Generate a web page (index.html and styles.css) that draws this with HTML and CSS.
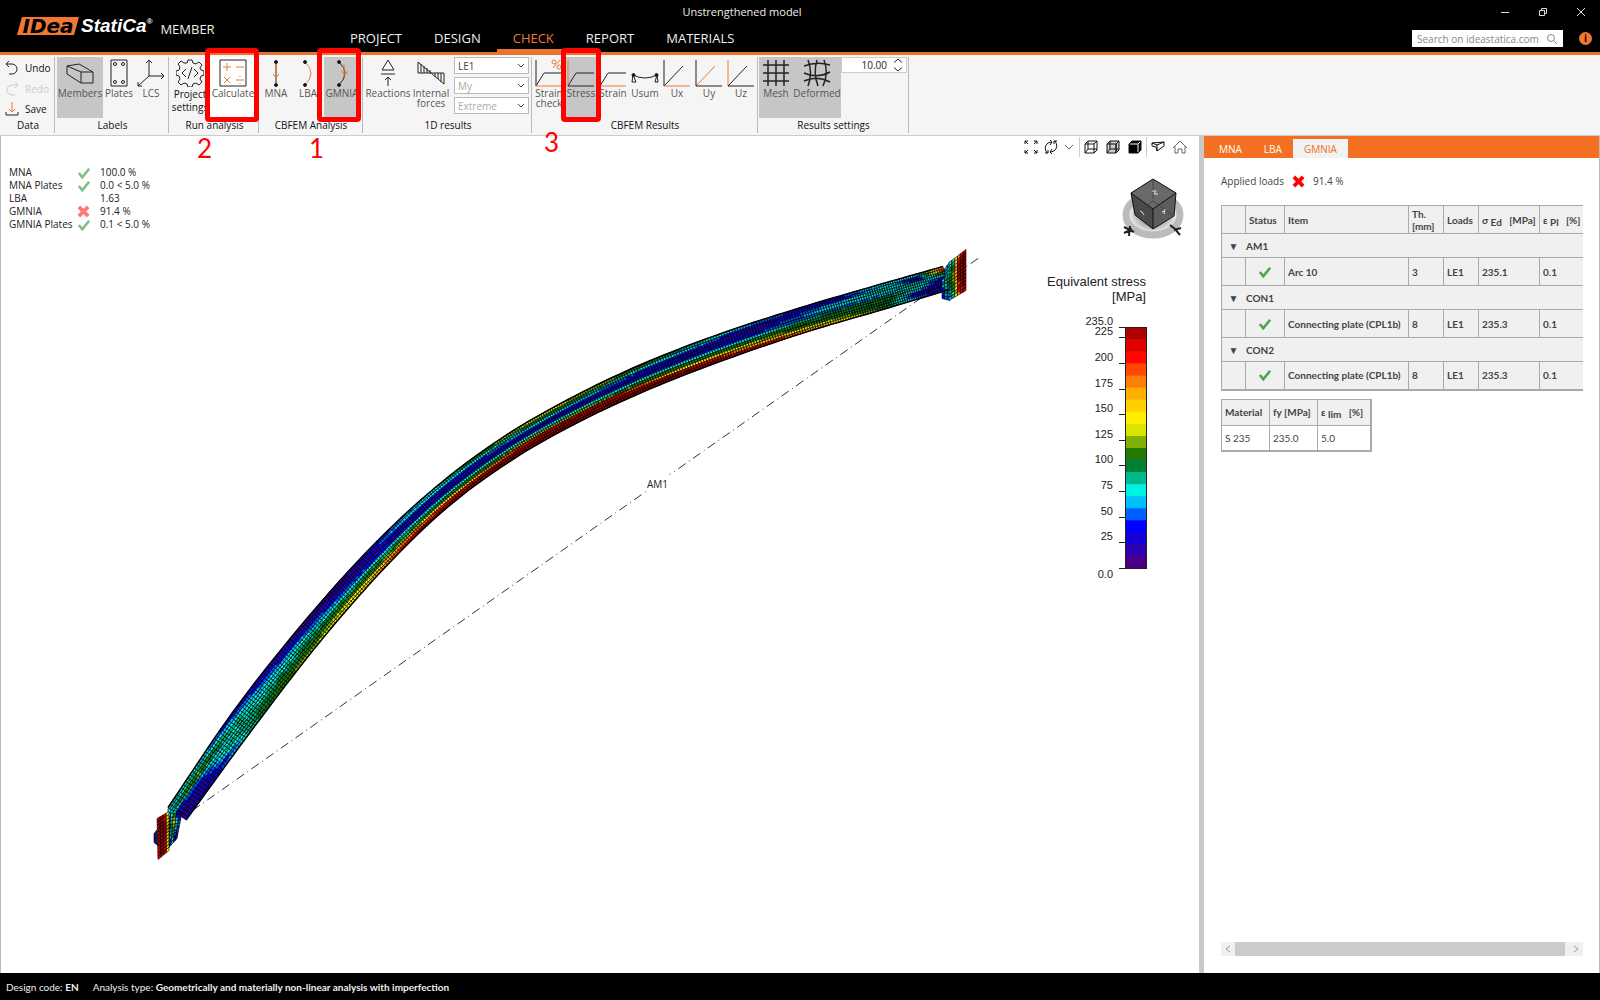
FILE: index.html
```html
<!DOCTYPE html>
<html lang="en">
<head>
<meta charset="utf-8">
<title>IDEA StatiCa Member</title>
<link rel="stylesheet" href="styles.css">
</head>
<body>
<header class="titlebar">
  <div class="brand">
    <span class="brand-idea">IDea</span>
    <span class="brand-statica">StatiCa<sup>®</sup></span>
    <span class="brand-app">MEMBER</span>
  </div>
  <nav class="menu">
    <a href="#project">PROJECT</a>
    <a href="#design">DESIGN</a>
    <a href="#check" class="active">CHECK</a>
    <a href="#report">REPORT</a>
    <a href="#materials">MATERIALS</a>
  </nav>
  <div class="doc-title">Unstrengthened model</div>
  <div class="title-right">
    <div class="window-buttons">
      <button aria-label="Minimize"><svg width="12" height="12" viewBox="0 0 12 12"><path d="M2 6.500h8"/></svg></button>
      <button aria-label="Restore"><svg width="12" height="12" viewBox="0 0 12 12"><path d="M2.500 4.500h5v5h-5zM4.500 4.500v-2h5v5h-2"/></svg></button>
      <button aria-label="Close"><svg width="12" height="12" viewBox="0 0 12 12"><path d="M2 2l8 8M10 2l-8 8"/></svg></button>
    </div>
    <div class="search-row">
      <div class="search">
        <input type="text" placeholder="Search on ideastatica.com" aria-label="Search on ideastatica.com">
        <svg width="12" height="12" viewBox="0 0 12 12"><circle cx="5" cy="5" r="3.500"/><path d="M7.500 7.500L11 11"/></svg>
      </div>
      <button class="info" aria-label="Information">i</button>
    </div>
  </div>
</header>

<section class="ribbon">
  <div class="group g-data">
    <div class="group-body stack">
      <button class="line-btn"><svg width="14" height="16" viewBox="0 0 14 16"><path d="M4 1L1 4l3 3M1 4h6a5 5 0 0 1 0 10H4"/></svg>Undo</button>
      <button class="line-btn off" disabled><svg width="14" height="16" viewBox="0 0 14 16"><path d="M10 1l3 3-3 3M13 4H7a5 5 0 0 0 0 10h3"/></svg>Redo</button>
      <button class="line-btn"><svg width="14" height="16" viewBox="0 0 14 16"><path class="o" d="M7 1v10M4 8l3 3 3-3"/><path d="M1 11v3h12v-3"/></svg>Save</button>
    </div>
    <div class="group-name">Data</div>
  </div>

  <div class="group g-labels">
    <div class="group-body">
      <button class="tool on w46"><svg width="28" height="28" viewBox="0 0 28 28"><path d="M1 7l12-2 14 8v11H15L1 15zM1 7l14 6h12M15 13v11"/></svg>Members</button>
      <button class="tool w32"><svg width="28" height="28" viewBox="0 0 28 28"><path d="M6 1h16v26H6z"/><circle cx="10" cy="5" r="1.500"/><circle cx="18" cy="5" r="1.500"/><circle cx="10" cy="23" r="1.500"/><circle cx="18" cy="23" r="1.500"/></svg>Plates</button>
      <button class="tool w32"><svg width="28" height="28" viewBox="0 0 28 28"><path d="M12 17V1M9 4l3-3 3 3M12 17h15M24 14l3 3-3 3M12 17L1 27M1 23v4h4"/></svg>LCS</button>
    </div>
    <div class="group-name">Labels</div>
  </div>

  <div class="group g-run">
    <div class="group-body">
      <button class="tool dark w38"><svg width="28" height="28" viewBox="0 0 28 28"><path d="M11 4l1-3h4l1 3 3 1 3-2 3 3-2 3 1 2 3 1v4l-3 1-1 3 2 3-3 3-3-2-3 1-1 3h-4l-1-3-3-1-3 2-3-3 2-3-1-3-3-1v-4l3-1 1-3-2-3 3-3 3 2zM10 10l-4 4 4 4M18 10l4 4-4 4M16 8l-4 12"/></svg>Project settings</button>
      <button class="tool hover w48"><svg width="28" height="28" viewBox="0 0 28 28"><path d="M1 1h26v26H1z"/><path class="o" d="M8 4v8M4 8h8M17 8h8M5 18l6 6M11 18l-6 6M17 21h8M21 17v1M21 24v1"/></svg>Calculate</button>
    </div>
    <div class="group-name">Run analysis</div>
  </div>

  <div class="group g-analysis">
    <div class="group-body">
      <button class="tool w32"><svg width="28" height="28" viewBox="0 0 28 28"><path d="M14 3v23"/><circle class="f" cx="14" cy="3" r="1.500"/><circle class="f" cx="14" cy="26" r="1.500"/><path class="o" d="M14 5v14M11 15l3 4 3-4"/></svg>MNA</button>
      <button class="tool w32"><svg width="28" height="28" viewBox="0 0 28 28"><path class="o" d="M11 3q12 11 0 23"/><circle class="f" cx="11" cy="3" r="1.500"/><circle class="f" cx="11" cy="26" r="1.500"/></svg>LBA</button>
      <button class="tool on w36"><svg width="28" height="28" viewBox="0 0 28 28"><path d="M11 3q12 11 0 23"/><circle class="f" cx="11" cy="3" r="1.500"/><circle class="f" cx="11" cy="26" r="1.500"/><path class="o" d="M16 5v12M13 12l4 4 3-4"/></svg>GMNIA</button>
    </div>
    <div class="group-name">CBFEM Analysis</div>
  </div>

  <div class="group g-1d">
    <div class="group-body">
      <button class="tool w46"><svg width="28" height="28" viewBox="0 0 28 28"><path d="M14 1l6 10H8zM7 15h14M14 27V18M11 21l3-3 3 3"/></svg>Reactions</button>
      <button class="tool w40"><svg width="28" height="28" viewBox="0 0 28 28"><path d="M1 3v11h26v11zM4 5v9M7 7v7M10 9v5M13 11v3M18 14v4M21 14v6M24 14v9"/></svg>Internal forces</button>
      <div class="selects">
        <select aria-label="Load case"><option>LE1</option></select>
        <select aria-label="Component" disabled><option>My</option></select>
        <select aria-label="Values" disabled><option>Extreme</option></select>
      </div>
    </div>
    <div class="group-name">1D results</div>
  </div>

  <div class="group g-results">
    <div class="group-body">
      <button class="tool w32"><svg width="28" height="28" viewBox="0 0 28 28"><path d="M1 1v26l8-13h18"/><path class="o" d="M1 27h26M18 9l7-8"/><circle class="o" cx="19" cy="3" r="2"/><circle class="o" cx="24" cy="8" r="2"/></svg>Strain check</button>
      <button class="tool on w32"><svg width="28" height="28" viewBox="0 0 28 28"><path class="o" d="M1 1v26"/><path d="M27 27H1l8-13h18"/></svg>Stress</button>
      <button class="tool w32"><svg width="28" height="28" viewBox="0 0 28 28"><path d="M1 1v26l8-13h18"/><path class="o" d="M1 27h26"/></svg>Strain</button>
      <button class="tool w32"><svg width="28" height="28" viewBox="0 0 28 28"><path d="M2 16q12 6 24 0M2 16l-1 7h4l-2-5zM26 16l-2 7h3zM2 16v2"/><circle class="f" cx="2.500" cy="16" r="1.500"/><circle class="f" cx="25.500" cy="16" r="1.500"/></svg>Usum</button>
      <button class="tool w32"><svg width="28" height="28" viewBox="0 0 28 28"><path d="M1 1v26L20 7"/><path class="o" d="M1 27h26"/></svg>Ux</button>
      <button class="tool w32"><svg width="28" height="28" viewBox="0 0 28 28"><path class="o" d="M1 27L20 7"/><path d="M1 1v26h26"/></svg>Uy</button>
      <button class="tool w32"><svg width="28" height="28" viewBox="0 0 28 28"><path class="o" d="M1 1v26"/><path d="M20 7L1 27h26"/></svg>Uz</button>
    </div>
    <div class="group-name">CBFEM Results</div>
  </div>

  <div class="group g-settings">
    <div class="group-body">
      <button class="tool on w34"><svg width="28" height="28" viewBox="0 0 28 28"><path class="b" d="M6 1v26M14 1v26M22 1v26M1 6h26M1 14h26M1 22h26"/></svg>Mesh</button>
      <button class="tool on w48"><svg width="28" height="28" viewBox="0 0 28 28"><path class="b" d="M5 1q5 13 0 26M14 1q-4 13 1 26M21 1q5 13-1 26M1 7q13-5 26-1M1 14q13 6 26-1M1 22q13-6 26 1"/></svg>Deformed</button>
      <div class="spin">
        <input type="text" value="10.00" aria-label="Deformation scale">
        <svg width="10" height="14" viewBox="0 0 10 14"><path d="M1 4.500L5 1l4 3.500M1 9.500L5 13l4-3.500"/></svg>
      </div>
    </div>
    <div class="group-name">Results settings</div>
  </div>

  <div class="mark mark-calculate"></div><span class="step step-2">2</span>
  <div class="mark mark-gmnia"></div><span class="step step-1">1</span>
  <div class="mark mark-stress"></div><span class="step step-3">3</span>
</section>

<main class="workspace">
  <section class="viewer">
    <svg class="scene" viewBox="0 136 1198 836" preserveAspectRatio="xMidYMid meet">
      <path class="axis" d="M977 258L935 287M935 287L190 811"/>
      <rect class="name-gap" x="645" y="474" width="26" height="18"/>
      <g id="model"></g>
      <text class="member-name" x="646" y="487">AM1</text>
    </svg>

    <table class="summary">
      <tr><th>MNA</th><td><svg class="tick" viewBox="0 0 14 14"><path d="M1 7l4 5L13 2"/></svg></td><td>100.0 %</td></tr>
      <tr><th>MNA Plates</th><td><svg class="tick" viewBox="0 0 14 14"><path d="M1 7l4 5L13 2"/></svg></td><td>0.0 &lt; 5.0 %</td></tr>
      <tr><th>LBA</th><td></td><td>1.63</td></tr>
      <tr><th>GMNIA</th><td><svg class="cross" viewBox="0 0 14 14"><path d="M2 2l10 10M12 2L2 12"/></svg></td><td>91.4 %</td></tr>
      <tr><th>GMNIA Plates</th><td><svg class="tick" viewBox="0 0 14 14"><path d="M1 7l4 5L13 2"/></svg></td><td>0.1 &lt; 5.0 %</td></tr>
    </table>

    <div class="view-tools">
      <button aria-label="Zoom to fit"><svg viewBox="0 0 14 14"><path d="M1 4V1h3M1 1l3 3M10 1h3v3M13 1l-3 3M1 10v3h3M1 13l3-3M13 10v3h-3M13 13l-3-3"/></svg></button>
      <button class="near" aria-label="Rotate"><svg viewBox="0 0 14 14"><path d="M3 13Q-1 7 4 3q2-1 4-1M6 0l2 2-2 3M11 1q4 6-1 10-2 1-4 1M8 9l-2 3 2 2M1 13h3v-3M13 1h-3v3"/></svg></button>
      <button class="nearer" aria-label="More"><svg class="thin" viewBox="0 0 14 14"><path d="M4 5l4 4 4-4"/></svg></button>
      <i></i>
      <button aria-label="Wireframe"><svg viewBox="0 0 14 14"><path d="M1 4h9v9H1zM1 4l3-3h9v9l-3 3M10 4l3-3M4 1v8L1 13M4 9h9"/></svg></button>
      <button aria-label="Transparent"><svg viewBox="0 0 14 14"><path fill="#ccc" d="M1 4h9v9H1zM1 4l3-3h9v9l-3 3M10 4l3-3"/><path d="M4 1v8L1 13M4 9h9M10 4v9"/></svg></button>
      <button aria-label="Solid"><svg viewBox="0 0 14 14"><path fill="#000" d="M1 4l3-3h9v9l-3 3H1z"/><path stroke="#fff" d="M2 4h8v8M10 4l2-2"/></svg></button>
      <i></i>
      <button aria-label="Perspective"><svg viewBox="0 0 14 14"><path d="M1 3l12-1v4L6 11l-1-4-4-1zM1 3l5 2 7-3M6 5v6"/></svg></button>
      <button aria-label="Home view"><svg class="thin" viewBox="0 0 14 14"><path d="M0 8l7-7 7 7M2 6.500V13h3V9h4v4h3V6.500"/></svg></button>
    </div>

    <svg class="cube" width="64" height="64" viewBox="0 0 64 64">
      <defs><radialGradient id="shade"><stop offset="0.4" stop-color="#999"/><stop offset="1" stop-color="#fff"/></radialGradient></defs>
      <ellipse cx="32" cy="38" rx="27" ry="20" fill="url(#shade)" stroke="#bbb" stroke-width="7"/>
      <path fill="#5d5d5d" d="M32 2l23 14-2 23-21 13-18-14L10 16z"/>
      <path fill="#4b4b4b" d="M10 16l22 16v20L14 38z"/>
      <path fill="#6a6a6a" d="M32 2l23 14-23 16-22-16z"/>
      <path fill="none" stroke="#111" d="M32 2l23 14-2 23-21 13-18-14L10 16zM10 16l22 16 23-16M32 32v20"/>
      <path fill="none" stroke="#444" d="M32 2v20M14 38l18-14 21 15"/>
      <path fill="none" stroke="#ddd" d="M31 14l4 0-2 3 4 0M19 34l2 1 2 3M41 35l3-1M44 32l-1 5"/>
      <path fill="none" stroke="#222" stroke-width="2" d="M3 50l10 5M9 49l-1 10M3 56l8-4M49 48l5 4 5 6M53 53l7-2"/>
    </svg>

    <svg class="legend" id="legend" width="110" height="320" viewBox="0 0 110 320"></svg>
  </section>

  <div class="splitter"></div>

  <aside class="panel">
    <nav class="tabs">
      <button>MNA</button><button>LBA</button><button class="active">GMNIA</button>
    </nav>
    <div class="panel-body">
      <div class="applied">Applied loads <svg class="cross strong" viewBox="0 0 14 14"><path d="M2 2l10 10M12 2L2 12"/></svg> 91.4 %</div>
      <div class="table-clip">
        <table class="grid checks">
          <colgroup><col class="c24"><col class="c39"><col class="c124"><col class="c35"><col class="c35"><col class="c61"><col class="c61"></colgroup>
          <thead><tr><th></th><th>Status</th><th>Item</th><th>Th. [mm]</th><th>Loads</th><th>σ <sub>Ed</sub> &nbsp; [MPa]</th><th>ε <sub>Pl</sub> &nbsp; [%]</th></tr></thead>
          <tbody>
            <tr class="head"><td class="mid">▼</td><td colspan="6">AM1</td></tr>
            <tr><td></td><td class="mid"><svg class="tick strong" viewBox="0 0 14 14"><path d="M1 7l4 5L13 2"/></svg></td><td>Arc 10</td><td>3</td><td>LE1</td><td>235.1</td><td>0.1</td></tr>
            <tr class="head"><td class="mid">▼</td><td colspan="6">CON1</td></tr>
            <tr><td></td><td class="mid"><svg class="tick strong" viewBox="0 0 14 14"><path d="M1 7l4 5L13 2"/></svg></td><td>Connecting plate (CPL1b)</td><td>8</td><td>LE1</td><td>235.3</td><td>0.1</td></tr>
            <tr class="head"><td class="mid">▼</td><td colspan="6">CON2</td></tr>
            <tr><td></td><td class="mid"><svg class="tick strong" viewBox="0 0 14 14"><path d="M1 7l4 5L13 2"/></svg></td><td>Connecting plate (CPL1b)</td><td>8</td><td>LE1</td><td>235.3</td><td>0.1</td></tr>
          </tbody>
        </table>
      </div>
      <table class="grid material">
        <colgroup><col class="c48"><col class="c48"><col class="c53"></colgroup>
        <thead><tr><th>Material</th><th>fy [MPa]</th><th>ε <sub>lim</sub> &nbsp; [%]</th></tr></thead>
        <tbody><tr><td>S 235</td><td>235.0</td><td>5.0</td></tr></tbody>
      </table>
      <div class="hscroll">
        <button aria-label="Scroll left"><svg width="6" height="8" viewBox="0 0 6 8"><path d="M5 1L1 4l4 3"/></svg></button>
        <div class="thumb"></div>
        <button aria-label="Scroll right"><svg width="6" height="8" viewBox="0 0 6 8"><path d="M1 1l4 3-4 3"/></svg></button>
      </div>
    </div>
  </aside>
</main>

<footer class="status">
  <span>Design code: <b>EN</b></span>
  <span>Analysis type: <b>Geometrically and materially non-linear analysis with imperfection</b></span>
</footer>
<script src="model.js"></script>
</body>
</html>
```
FILE: styles.css
```css
* { box-sizing: border-box; }
body {
  margin: 0;
  min-height: 100vh;
  display: flex;
  flex-direction: column;
  background: #fff;
  color: #222;
  font: 10px/14px "Open Sans", "Noto Sans", sans-serif;
}
button, input, select { font: inherit; color: inherit; }
button { border: 0; background: none; padding: 0; }
svg { display: block; fill: none; stroke: #222; flex: none; }
svg text { stroke: none; fill: #222; }
.o { stroke: #f07832; }
.f { fill: #111; }
.b { stroke-width: 1.5; }

/* title bar */
.titlebar {
  position: relative;
  display: flex;
  align-items: flex-end;
  height: 55px;
  background: #000;
  color: #eee;
  border-bottom: 3px solid #e9722f;
}
.brand { display: flex; align-items: center; width: 334px; padding-left: 17px; height: 52px; }
.brand-idea {
  width: 62px;
  height: 18px;
  background: #f07832;
  clip-path: polygon(8% 0, 100% 0, 92% 100%, 0 100%);
  color: #000;
  font: italic bold 20px/18px "DejaVu Sans", sans-serif;
  text-align: center;
}
.brand-statica { margin-left: 2px; font: italic bold 19px/20px "Liberation Sans", sans-serif; color: #fff; }
.brand-statica sup { font-size: 8px; line-height: 8px; vertical-align: 8px; }
.brand-app { margin: 6px 0 0 8px; font-size: 13px; line-height: 16px; }
.menu { display: flex; }
.menu a {
  padding: 0 16px;
  height: 23px;
  color: #eee;
  font-size: 13px;
  line-height: 18px;
  text-decoration: none;
  border-bottom: 3px solid transparent;
}
.menu a.active { color: #f07832; border-color: #e9722f; }
.doc-title { position: absolute; top: 4px; left: 0; right: 116px; text-align: center; font-size: 11px; line-height: 16px; pointer-events: none; }
.title-right { margin-left: auto; align-self: stretch; display: flex; flex-direction: column; padding: 6px 8px 0 0; gap: 12px; }
.window-buttons { display: flex; justify-content: flex-end; gap: 26px; padding-right: 5px; }
.window-buttons svg { stroke: #ddd; }
.search-row { display: flex; gap: 16px; align-items: center; }
.search { display: flex; align-items: center; width: 151px; height: 17px; background: #fff; padding: 0 5px; }
.search input { flex: 1; min-width: 0; border: 0; outline: 0; padding: 0; height: 17px; }
.search input::placeholder { color: #888; }
.search svg { stroke: #888; }
.info { width: 13px; height: 13px; border-radius: 50%; background: #f07832; color: #300; font-weight: bold; line-height: 13px; }

/* ribbon */
.ribbon { position: relative; display: flex; height: 81px; padding-top: 2px; background: #f5f5f5; border-bottom: 1px solid #ccc; }
.group { display: flex; flex-direction: column; border-right: 1px solid #bbb; height: 76px; padding-left: 2px; }
.group-body { display: flex; height: 61px; }
.group-name { text-align: center; line-height: 15px; color: #111; }
.stack { flex-direction: column; justify-content: space-between; padding: 2px 0 0 3px; }
.line-btn { display: flex; align-items: center; gap: 6px; height: 18px; color: #111; }
.line-btn.off { color: #ccc; }
.line-btn.off svg { stroke: #ccc; }
.g-data { width: 55px; }
.g-labels { width: 114px; }
.g-run { width: 90px; }
.g-analysis { width: 104px; padding-left: 1px; }
.g-1d { width: 169px; }
.g-results { width: 226px; padding-left: 1px; }
.g-settings { width: 151px; padding-left: 1px; }
.tool { display: flex; flex-direction: column; align-items: center; gap: 1px; padding-top: 2px; height: 61px; flex: none; line-height: 10px; color: #555; }
.tool.on { background: #c6c6c6; }
.tool.hover { background: #fff; }
.tool.dark { color: #111; line-height: 13px; }
.w32 { width: 32px; }
.w34 { width: 34px; }
.w36 { width: 36px; }
.w38 { width: 38px; }
.w40 { width: 40px; }
.w46 { width: 46px; }
.w48 { width: 48px; }
.selects { display: flex; flex-direction: column; gap: 3px; width: 75px; margin-left: 3px; }
.selects select {
  height: 17px;
  border: 1px solid #bbb;
  padding: 0 3px;
  color: #444;
  appearance: none;
  border-radius: 0;
  opacity: 1;
  background: #fff url("data:image/svg+xml,%3Csvg xmlns='http://www.w3.org/2000/svg' width='8' height='6'%3E%3Cpath d='M1 1l3 3 3-3' fill='none' stroke='%23444'/%3E%3C/svg%3E") no-repeat right 3px center;
}
.selects select:disabled { color: #aaa; }
.spin { display: flex; align-items: center; width: 66px; height: 16px; border: 1px solid #ccc; background: #fff; padding-right: 3px; gap: 6px; }
.spin input { flex: 1; min-width: 0; border: 0; padding: 0; background: none; height: 14px; text-align: right; }

/* tutorial marks over the ribbon */
.mark { position: absolute; top: -7px; height: 74px; border: 5px solid #f00; border-radius: 4px; }
.mark-calculate { left: 205px; width: 54px; }
.mark-gmnia { left: 317px; width: 44px; }
.mark-stress { left: 561px; width: 40px; }
.step { position: absolute; top: 79px; color: #f00; font: 26px/28px Lato, sans-serif; z-index: 1; }
.step-2 { left: 197px; }
.step-1 { left: 309px; }
.step-3 { left: 544px; top: 73px; }

/* workspace */
.workspace { flex: 1; display: flex; min-height: 0; }
.viewer { position: relative; flex: 1; min-width: 0; border-left: 1px solid #bbb; }
.scene { position: absolute; inset: 0; width: 100%; height: 100%; }
.axis { stroke: #333; stroke-dasharray: 9 4 1 4; }
.name-gap { fill: #fff; stroke: none; }
.member-name { font-size: 10px; }
.summary { position: absolute; left: 8px; top: 30px; border-collapse: collapse; line-height: 13px; }
.summary th { font-weight: normal; text-align: left; width: 68px; padding: 0; white-space: nowrap; }
.summary td { padding: 0; height: 13px; white-space: nowrap; }
.summary td:nth-child(2) { width: 23px; }
.tick { width: 14px; height: 12px; stroke: #7cc084; stroke-width: 3; }
.cross { width: 13px; height: 13px; stroke: #f77; stroke-width: 4; }
.tick.strong { stroke: #4ca64c; margin: 0 auto; }
.cross.strong { stroke: #f00; }
.view-tools { position: absolute; top: 1px; right: 12px; display: flex; align-items: center; gap: 8px; }
.view-tools svg { width: 14px; height: 14px; stroke: #111; overflow: visible; }
.view-tools .thin { stroke: #666; }
.view-tools .near { margin-left: -2px; }
.view-tools .nearer { margin-left: -5px; }
.view-tools i { width: 1px; height: 20px; background: #ccc; margin: 0 -4px; }
.cube { position: absolute; top: 41px; right: 14px; stroke: none; }
.legend { position: absolute; top: 136px; right: 40px; overflow: visible; }
.legend text { font-family: "Liberation Sans", sans-serif; font-size: 11px; text-anchor: end; }
.legend .title { font-size: 13px; }

.splitter { width: 5px; background: #c9c9c9; }
.panel { width: 396px; display: flex; flex-direction: column; border-right: 1px solid #bbb; color: #444; }
.tabs { display: flex; align-items: flex-end; height: 22px; background: #f36f21; padding-left: 4px; }
.tabs button { height: 19px; padding: 0 11px; color: #fff; }
.tabs button.active { background: #f2f2f2; color: #f36f21; }
.panel-body { flex: 1; display: flex; flex-direction: column; padding: 16px 16px 17px 17px; }
.applied { display: flex; gap: 8px; align-items: center; height: 14px; }
.table-clip { overflow: hidden; margin-top: 17px; }
.grid { border-collapse: collapse; table-layout: fixed; border: 1px solid #aaa; border-bottom-width: 2px; font-family: Lato, sans-serif; }
.grid th, .grid td { border: 1px solid #aaa; padding: 0 3px; text-align: left; font-weight: bold; white-space: nowrap; }
.grid th { background: #f0f0f0; }
.grid sub { font-size: 10px; line-height: 8px; vertical-align: -2px; }
.checks { width: 379px; background: #f0f0f0; }
.checks thead tr { height: 28px; }
.checks tbody tr { height: 28px; }
.checks tbody .head { height: 24px; }
.checks th:nth-child(4) { white-space: normal; line-height: 12px; }
.grid .head td { border-left-color: transparent; padding-left: 0; }
.grid .head td:first-child { border-left-color: #aaa; border-right-color: transparent; padding-left: 3px; }
.grid td.mid { text-align: center; }
.c24 { width: 24px; }
.c39 { width: 39px; }
.c124 { width: 124px; }
.c35 { width: 35px; }
.c48 { width: 48px; }
.c53 { width: 53px; }
.c61 { width: 61px; }
.material { width: 149px; margin-top: 8px; border-right-width: 2px; }
.material tr { height: 26px; }
.material tbody td { font-weight: normal; }
.hscroll { display: flex; height: 14px; margin-top: auto; background: #f0f0f0; }
.hscroll button { width: 14px; display: grid; place-items: center; }
.hscroll svg { stroke: #999; }
.thumb { flex: 1; background: #cbcbcb; margin-right: 4px; }

.status { display: flex; gap: 14px; align-items: center; height: 27px; background: #000; color: #eee; padding: 0 6px; font-family: Lato, sans-serif; }
.status b { font-weight: bold; }
```
FILE: model.js
```js
// Stress palette, lowest to highest, shared by the legend and the model.
const palette = ['#4b0082', '#2e00b0', '#1500d8', '#0000ff', '#0060ff', '#00bfff', '#00f0e6', '#00b98a', '#008035', '#237a00',
  '#80b000', '#d8e600', '#ffee00', '#ffd000', '#ffae00', '#ff8000', '#ff4800', '#ff0800', '#e00000', '#b00000'];
const NS = 'http://www.w3.org/2000/svg';
const MAX = 235;

function add(parent, name, attrs, text) {
  const el = document.createElementNS(NS, name);
  for (const key in attrs) el.setAttribute(key, attrs[key]);
  if (text) el.textContent = text;
  parent.appendChild(el);
}

// Legend
const legend = document.getElementById('legend');
const top0 = 55, barH = 241;
add(legend, 'text', { x: 97, y: 14, class: 'title' }, 'Equivalent stress');
add(legend, 'text', { x: 97, y: 29, class: 'title' }, '[MPa]');
palette.forEach((c, i) => add(legend, 'rect', {
  x: 77, y: top0 + (19 - i) * barH / 20, width: 20, height: barH / 20 + 0.5, fill: c, stroke: 'none' }));
add(legend, 'rect', { x: 76.5, y: top0 + 0.5, width: 21, height: barH });
for (const v of [0, 25, 50, 75, 100, 125, 150, 175, 200, 225, 235]) {
  const y = Math.round(top0 + barH * (1 - v / MAX)) + 0.5;
  add(legend, 'path', { d: `M70 ${y}h7` });
  add(legend, 'text', { x: 64, y: v === 0 ? y + 9 : y - 3 }, v === 0 || v === 235 ? v.toFixed(1) : String(v));
}

// Mesh cells are collected by colour, then written as one path per colour.
const cells = palette.map(() => '');
let seed = 7;
const noise = () => (seed = seed * 16807 % 2147483647) / 2147483647 - 0.5;
function cell(stress, pts) {
  const i = Math.max(0, Math.min(19, Math.floor(stress / MAX * 20)));
  cells[i] += 'M' + pts.map(p => p[0].toFixed(1) + ' ' + p[1].toFixed(1)).join('L') + 'Z';
}
const lerp = (a, b, t) => a + (b - a) * t;
const mix = (a, b, t) => a.map((v, i) => lerp(v, b[i], t));

// Upper edge of the arched member and its depth there: x, y, depth
const edge = [
  [167, 807, 22], [233, 710, 26], [300, 625, 25], [367, 550, 24], [433, 488, 23], [500, 438, 24],
  [567, 399, 25], [640, 364, 26], [720, 333, 26], [800, 307, 25], [875, 285, 25], [942, 266, 24]];
function spline(t) {
  const f = t * (edge.length - 1), i = Math.max(0, Math.min(edge.length - 2, Math.floor(f))), u = f - i;
  const p = k => k < 0 ? edge[0].map((v, j) => 2 * v - edge[1][j])
    : k >= edge.length ? edge[k - 1].map((v, j) => 2 * v - edge[k - 2][j]) : edge[k];
  return [0, 1, 2].map(k => {
    const a = p(i - 1)[k], b = p(i)[k], c = p(i + 1)[k], d = p(i + 2)[k];
    return 0.5 * (2 * b + (c - a) * u + (2 * a - 5 * b + 4 * c - d) * u * u + (3 * b - a - 3 * c + d) * u * u * u);
  });
}
function outlineAt(t) {
  const [x, y, depth] = spline(t), a = spline(t - 0.04), b = spline(t + 0.04);
  const dx = b[0] - a[0], dy = b[1] - a[1], len = Math.hypot(dx, dy);
  return [x, y, x - dy / len * depth, y + dx / len * depth];
}

// Stress across the section, top to bottom, at positions along the member
const profile = [
  [0.00, [90, 60, 95, 80, 40, 30, 20, 15, 20, 25]],
  [0.03, [75, 95, 120, 95, 60, 40, 30, 20, 25, 30]],
  [0.06, [55, 75, 90, 95, 85, 80, 85, 75, 50, 60]],
  [0.10, [30, 50, 65, 75, 80, 82, 90, 95, 105, 100]],
  [0.17, [15, 22, 35, 60, 72, 85, 95, 105, 110, 125]],
  [0.24, [20, 16, 16, 28, 50, 75, 95, 110, 145, 150]],
  [0.32, [55, 72, 28, 28, 28, 72, 95, 125, 190, 228]],
  [0.40, [100, 72, 40, 28, 28, 75, 108, 170, 228, 230]],
  [0.50, [135, 100, 72, 30, 30, 72, 125, 222, 228, 230]],
  [0.58, [125, 95, 60, 28, 28, 72, 118, 222, 228, 230]],
  [0.68, [95, 68, 28, 28, 30, 75, 108, 150, 225, 230]],
  [0.76, [60, 28, 18, 28, 45, 75, 105, 130, 170, 220]],
  [0.84, [30, 28, 60, 75, 55, 95, 105, 100, 130, 160]],
  [0.92, [80, 75, 90, 80, 60, 100, 105, 100, 95, 100]],
  [0.96, [75, 25, 30, 90, 80, 75, 60, 25, 25, 50]],
  [1.00, [180, 225, 120, 70, 25, 20, 12, 12, 18, 25]]];
function stressAt(t, row) {
  let i = 0;
  while (i < profile.length - 2 && profile[i + 1][0] < t) i++;
  const [t0, a] = profile[i], [t1, b] = profile[i + 1];
  return lerp(a[row], b[row], Math.min(1, (t - t0) / (t1 - t0)));
}
const STEPS = 330, ROWS = 10;
for (let n = 0; n < STEPS; n++) {
  const a = outlineAt(n / STEPS), b = outlineAt((n + 1) / STEPS);
  for (let r = 0; r < ROWS; r++) {
    const at = (o, s) => [lerp(o[0], o[2], s), lerp(o[1], o[3], s)];
    cell(stressAt(n / STEPS, r) + noise() * 6,
      [at(a, r / ROWS), at(b, r / ROWS), at(b, (r + 1) / ROWS), at(a, (r + 1) / ROWS)]);
  }
}

// A quadrilateral plate meshed in cols x rows; columns give the stress left to right
function plate(tl, tr, br, bl, cols, rows, values) {
  for (let c = 0; c < cols; c++) for (let r = 0; r < rows; r++) {
    const q = (x, y) => mix(mix(tl, tr, x / cols), mix(bl, br, x / cols), y / rows);
    const rim = Math.abs((r + 0.5) / rows - 0.45) * 2;
    cell(values[c] - rim * 45 + noise() * 30, [q(c, r), q(c + 1, r), q(c + 1, r + 1), q(c, r + 1)]);
  }
}
plate([941, 272], [949, 261], [949, 300], [941, 298], 3, 10, [70, 95, 105]);
plate([948, 262], [965, 249], [965, 290], [948, 300], 6, 12, [105, 125, 180, 235, 260, 270]);
plate([153, 833], [158, 827], [158, 846], [153, 842], 2, 6, [50, 85]);
plate([167, 808], [181, 812], [176, 838], [166, 849], 5, 10, [110, 90, 125, 75, 60]);
plate([156, 818], [168, 811], [168, 850], [157, 859], 4, 12, [260, 270, 250, 180]);

const model = document.getElementById('model');
cells.forEach((d, i) => add(model, 'path', { d, fill: palette[i], stroke: '#000', 'stroke-width': 0.6 }));
const rim = k => Array.from({ length: 111 }, (_, i) => {
  const o = outlineAt(i / 110);
  return o[k].toFixed(1) + ' ' + o[k + 1].toFixed(1);
}).join('L');
add(model, 'path', { d: 'M' + rim(0) + 'M' + rim(2), stroke: '#000', 'stroke-width': 1.5 });
```
